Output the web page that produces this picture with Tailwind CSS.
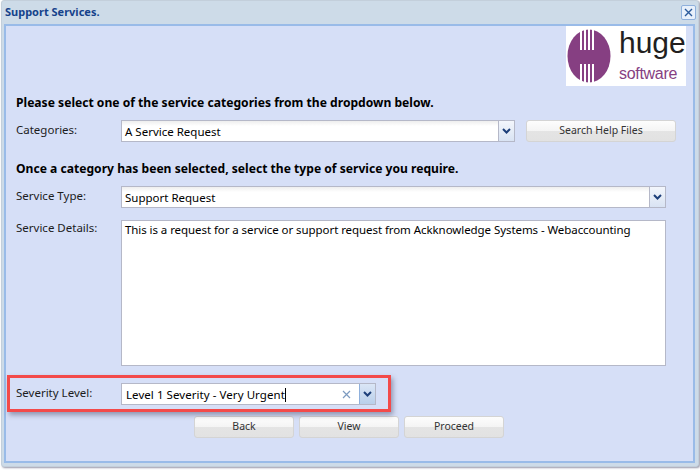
<!DOCTYPE html>
<html lang="en">
  <head>
    <meta charset="UTF-8" />
    <title>Support Services</title>
    <script src="https://cdn.jsdelivr.net/npm/@tailwindcss/browser@4"></script>
  </head>
  <body class="w-[700px] h-[471px] overflow-hidden bg-white font-['Noto_Sans',sans-serif] text-[11.5px] text-black">
    <!-- window -->
    <div class="relative w-[698px] h-[467px] ml-px bg-[#cddbe8] border border-[#c3cfdb] rounded-[3px] shadow-[1px_1px_2px_#99a]">
      <!-- title bar -->
      <div class="flex items-center justify-between h-[23px] pl-[3px] pr-[2px]">
        <span class="font-bold text-[11px] text-[#15428b]">Support Services.</span>
        <button class="flex items-center justify-center w-[15px] h-[15px] mt-[-1px] bg-[#e8f0fb] border border-[#8fb0dc] rounded-[2px]">
          <svg width="9" height="9" viewBox="0 0 9 9"><path d="M1 1l7 7M8 1L1 8" stroke="#2b5a9b" stroke-width="1.4" fill="none" /></svg>
        </button>
      </div>

      <!-- body panel -->
      <div class="ml-[2px] w-[691px] h-[439px] bg-[#d6dff7] border-[2px] border-[#99bbe8]">
        <div class="flex justify-end pr-[7px]">
          <div class="flex items-center w-[120px] h-[60px] bg-white pl-[1px] font-['Liberation_Sans',sans-serif]">
            <svg width="44" height="54" viewBox="0 0 44 54" class="shrink-0">
              <ellipse cx="22" cy="27" rx="21.5" ry="26.5" fill="#863f82" />
              <g fill="#ffffff">
                <rect x="13" y="0" width="2" height="21" /><rect x="17" y="0" width="2" height="21" /><rect x="21" y="0" width="2" height="21" /><rect x="25" y="0" width="2" height="21" />
                <rect x="13" y="35" width="2" height="19" /><rect x="17" y="35" width="2" height="19" /><rect x="21" y="35" width="2" height="19" /><rect x="25" y="35" width="2" height="19" />
              </g>
            </svg>
            <div class="ml-[8px]">
              <div class="text-[30px] leading-[30px] text-[#231f20] mt-[-2px]">huge</div>
              <div class="text-[16px] leading-[18px] tracking-[-0.3px] text-[#863f82] mt-[7px]">software</div>
            </div>
          </div>
        </div>

        <div class="pl-[10px] mt-[9px] font-bold text-[12.12px] leading-[16px]">Please select one of the service categories from the dropdown below.</div>

        <div class="flex mt-[9px] pl-[10px]">
          <label class="w-[105px] pt-[2px] leading-[16px] text-[#1c1c1c]">Categories:</label>
          <div class="flex w-[394px] h-[22px] bg-white border border-[#b5b8c8]">
            <span class="flex-1 pl-[3px] leading-[21px] bg-gradient-to-b from-[#eeeeee] to-white to-[25%]">A Service Request</span>
            <span class="flex items-center justify-center w-[16px] border-l border-[#b5b8c8] bg-gradient-to-b from-[#f3f6fc] to-[#d9e3f3]">
              <svg width="9" height="6" viewBox="0 0 9 6"><path d="M1 1l3.5 3.5L8 1" stroke="#1d3f7a" stroke-width="2" fill="none" /></svg>
            </span>
          </div>
          <button class="ml-[11px] w-[150px] h-[22px] border border-[#d4d4d4] rounded-[3px] bg-[linear-gradient(#fdfdfd_0%,#f4f4f4_50%,#e4e4e4_51%,#e2e2e2_100%)] text-[10.5px] text-[#333]">Search Help Files</button>
        </div>

        <div class="pl-[10px] mt-[19px] font-bold text-[12.12px] leading-[16px]">Once a category has been selected, select the type of service you require.</div>

        <div class="flex mt-[9px] pl-[10px]">
          <label class="w-[105px] pt-[2px] leading-[16px] text-[#1c1c1c]">Service Type:</label>
          <div class="flex w-[545px] h-[22px] bg-white border border-[#b5b8c8]">
            <span class="flex-1 pl-[3px] leading-[21px] bg-gradient-to-b from-[#eeeeee] to-white to-[25%]">Support Request</span>
            <span class="flex items-center justify-center w-[16px] border-l border-[#b5b8c8] bg-gradient-to-b from-[#f3f6fc] to-[#d9e3f3]">
              <svg width="9" height="6" viewBox="0 0 9 6"><path d="M1 1l3.5 3.5L8 1" stroke="#1d3f7a" stroke-width="2" fill="none" /></svg>
            </span>
          </div>
        </div>

        <div class="flex mt-[12px] pl-[10px]">
          <label class="w-[105px] leading-[15px] text-[#1c1c1c]">Service Details:</label>
          <div class="w-[545px] h-[146px] bg-white border border-[#b5b8c8] pl-[3px] pt-[1px] leading-[15px] tracking-[-0.07px]">This is a request for a service or support request from Ackknowledge Systems - Webaccounting</div>
        </div>

        <div class="flex mt-[17px] pl-[10px]">
          <label class="w-[105px] pt-[2px] leading-[16px] text-[#1c1c1c]">Severity Level:</label>
          <div class="flex w-[255px] h-[22px] bg-white border border-[#b5b8c8]">
            <span class="flex-1 pl-[4px] leading-[21px] tracking-[0.06px]">Level 1 Severity - Very Urgent<span class="inline-block w-px h-[14px] bg-black align-[-3px]"></span></span>
            <span class="flex items-center justify-center w-[11px] mr-[7px]">
              <svg width="9" height="9" viewBox="0 0 9 9"><path d="M1 1l7 7M8 1L1 8" stroke="#7d9bc0" stroke-width="1.2" fill="none" /></svg>
            </span>
            <span class="flex items-center justify-center w-[16px] border-l border-[#8fb0dc] bg-gradient-to-b from-[#dbe6f6] to-[#b9cfea]">
              <svg width="9" height="6" viewBox="0 0 9 6"><path d="M1 1l3.5 3.5L8 1" stroke="#1d3f7a" stroke-width="2" fill="none" /></svg>
            </span>
          </div>
        </div>

        <div class="flex gap-[5px] mt-[11px] pl-[188px]">
          <button class="w-[100px] h-[22px] border border-[#d4d4d4] rounded-[3px] bg-[linear-gradient(#fdfdfd_0%,#f4f4f4_50%,#e4e4e4_51%,#e2e2e2_100%)] text-[10.5px] text-[#333]">Back</button>
          <button class="w-[100px] h-[22px] border border-[#d4d4d4] rounded-[3px] bg-[linear-gradient(#fdfdfd_0%,#f4f4f4_50%,#e4e4e4_51%,#e2e2e2_100%)] text-[10.5px] text-[#333]">View</button>
          <button class="w-[100px] h-[22px] border border-[#d4d4d4] rounded-[3px] bg-[linear-gradient(#fdfdfd_0%,#f4f4f4_50%,#e4e4e4_51%,#e2e2e2_100%)] text-[10.5px] text-[#333]">Proceed</button>
        </div>
      </div>

      <!-- annotation rectangle -->
      <div class="absolute left-[5px] top-[374px] w-[384px] h-[37px] border-[3px] border-[#f34a4a] shadow-[2px_3px_5px_rgba(60,60,90,0.45)]"></div>
    </div>
  </body>
</html>
